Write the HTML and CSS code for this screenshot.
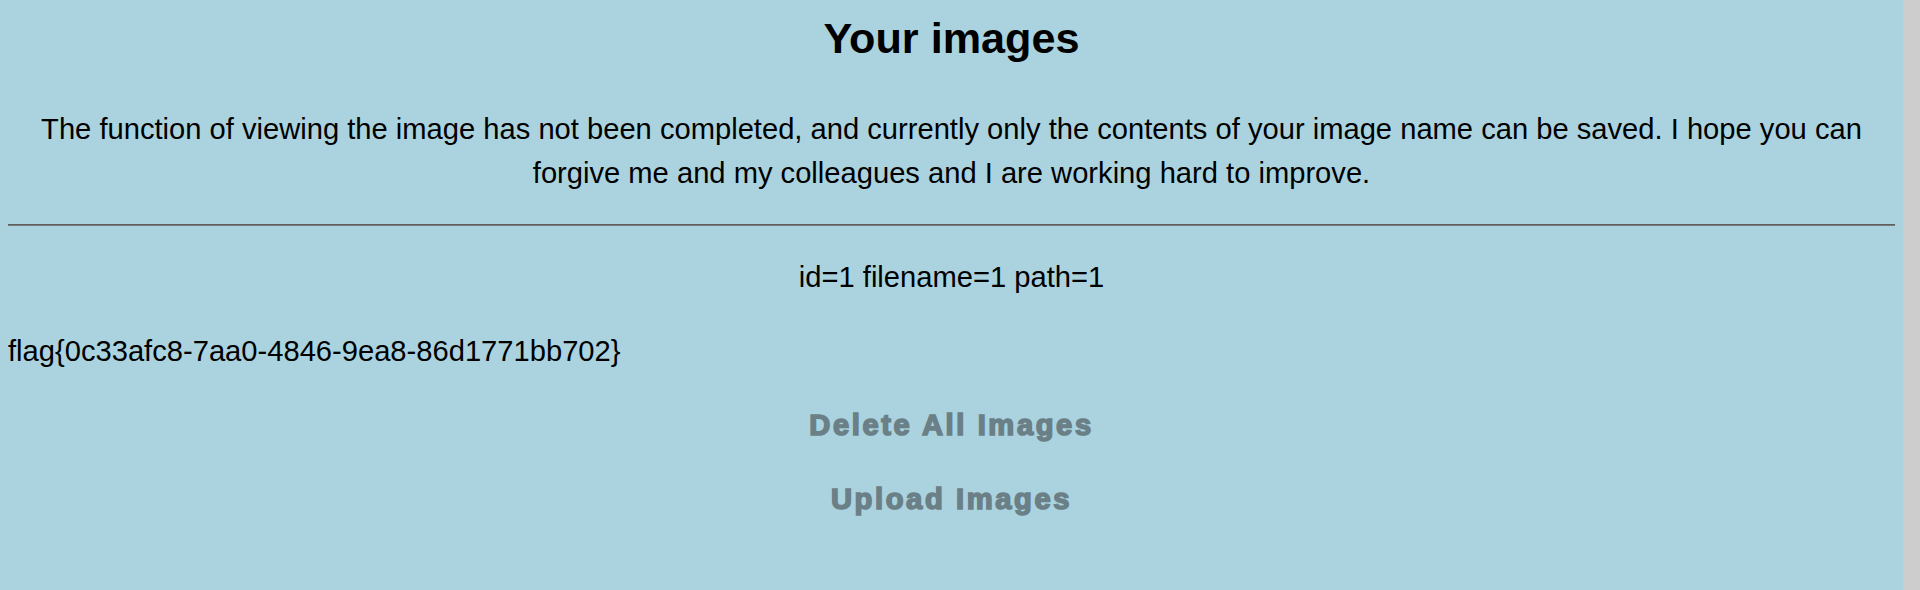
FILE: index.html
```html
<!DOCTYPE html>
<html lang="en">
<head>
<meta charset="utf-8">
<title>Your images</title>
<link rel="stylesheet" href="styles.css">
</head>
<body>
<div class="page">
  <main class="content">
    <h1 class="title">Your images</h1>
    <p class="intro">The function of viewing the image has not been completed, and currently only the contents of your image name can be saved. I hope you can forgive me and my colleagues and I are working hard to improve.</p>
    <hr class="divider">
    <p class="record">id=1 filename=1 path=1</p>
    <p class="flag">flag{0c33afc8-7aa0-4846-9ea8-86d1771bb702}</p>
    <div class="actions">
      <a class="action" href="#">Delete All Images</a>
      <a class="action" href="#">Upload Images</a>
    </div>
  </main>
  <div class="scrollbar"></div>
</div>
</body>
</html>
```

FILE: styles.css
```css
html, body {
  margin: 0;
  padding: 0;
  height: 100%;
}

body {
  font-family: "Liberation Sans", Arial, sans-serif;
  font-size: 29.15px;
  line-height: 44px;
  color: #000;
  overflow: hidden;
}

.page {
  display: flex;
  height: 100%;
}

.content {
  flex: 1;
  background: #aad3df;
  padding: 13px 8px 0 8px;
}

.scrollbar {
  width: 17px;
  flex: none;
  background: #cdcdcd;
}

.title {
  margin: 0;
  font-size: 43.2px;
  line-height: 50px;
  font-weight: 700;
  text-align: center;
}

.intro {
  margin: 44px 0 0 0;
  text-align: center;
}

.divider {
  margin: 29px 0 0 0;
  border: 0;
  border-top: 1px solid #5f5f5f;
  border-bottom: 1px solid #7a7a7a;
  height: 0;
}

.record {
  margin: 29px 0 0 0;
  text-align: center;
}

.flag {
  margin: 30px 0 0 0;
}

.actions {
  display: flex;
  flex-direction: column;
  align-items: center;
  gap: 30px;
  margin-top: 30px;
}

.action {
  color: #6b7f87;
  text-decoration: none;
  font-weight: 700;
  letter-spacing: 2.6px;
  -webkit-text-stroke: 1.6px #6b7f87;
}
```
